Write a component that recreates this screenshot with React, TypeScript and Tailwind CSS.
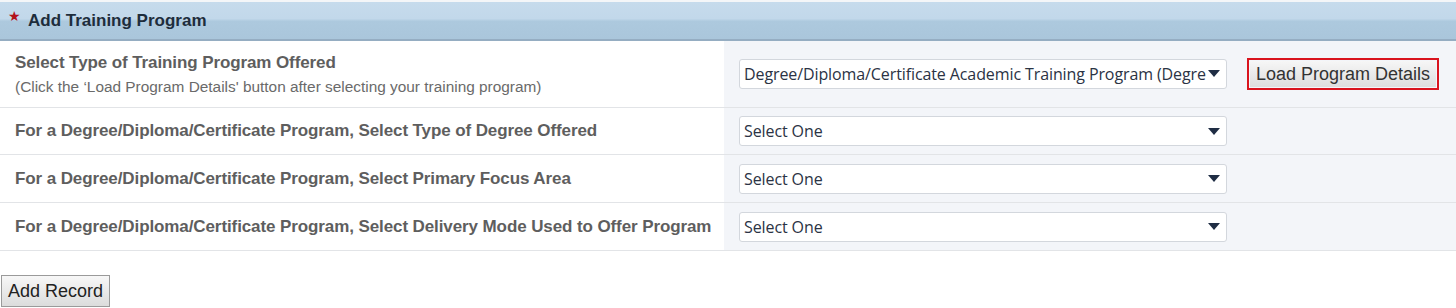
import React from 'react';

const Caret = () => (
  <svg width="12" height="7" viewBox="0 0 12 7" className="shrink-0">
    <path d="M0 0 L12 0 L6 7 Z" fill="#1f2d44" />
  </svg>
);

const FakeSelect = ({ value }: { value: string }) => (
  <div className="flex items-center h-[30px] w-[488px] bg-white border border-[#d3d7dd] rounded-[3px] pl-[4px] pr-[6px] gap-[2px]">
    <span className="flex-1 overflow-hidden whitespace-nowrap text-[16px] text-[#2b3344] font-['Segoe_UI','Open_Sans',sans-serif] tracking-[-0.1px]">
      {value}
    </span>
    <Caret />
  </div>
);

const App = () => {
  const rows = [
    'For a Degree/Diploma/Certificate Program, Select Type of Degree Offered',
    'For a Degree/Diploma/Certificate Program, Select Primary Focus Area',
    'For a Degree/Diploma/Certificate Program, Select Delivery Mode Used to Offer Program',
  ];

  return (
    <div className="w-[1456px] h-[308px] bg-white font-['Liberation_Sans',Arial,sans-serif] overflow-hidden">
      <div className="h-[2px] bg-[#f4f6f8]" />
      {/* header */}
      <div className="h-[39px] flex items-center gap-[7px] pl-[8px] border-b-2 border-[#95adc2] bg-[linear-gradient(to_bottom,#c6dbec_0%,#c2d8ea_45%,#adc9de_52%,#aac6db_100%)]">
        <span className="text-[#b3121b] text-[14px] leading-none -mt-[10px]">★</span>
        <span className="text-[17px] font-bold text-[#1e2d3c]">Add Training Program</span>
      </div>

      {/* row 1 */}
      <div className="flex h-[67px] border-b border-[#e2e4e7]">
        <div className="w-[724px] pl-[15px] pt-[12px]">
          <div className="text-[17px] font-bold text-[#5e5e5e] leading-[20px] tracking-[-0.1px]">Select Type of Training Program Offered</div>
          <div className="text-[15.4px] text-[#6a6a6a] leading-[18px] mt-[5px]">
            (Click the ‘Load Program Details' button after selecting your training program)
          </div>
        </div>
        <div className="flex-1 bg-[#f3f5f9] flex items-center pl-[15px] gap-[20px] pb-[1px]">
          <FakeSelect value="Degree/Diploma/Certificate Academic Training Program (Degree/Diploma/Certificate)" />
          <div className="border-2 border-[#d9141e] p-px">
            <button className="h-[26px] px-[6px] text-[18px] text-[#333] bg-[linear-gradient(to_bottom,#f6f6f6,#dedede)] leading-none">
              Load Program Details
            </button>
          </div>
        </div>
      </div>

      {rows.map((label, i) => (
        <div key={i} className={`flex border-b border-[#e2e4e7] ${i === 0 ? 'h-[47px]' : 'h-[48px]'}`}>
          <div className="w-[724px] pl-[15px] flex items-center">
            <span className="text-[17px] font-bold text-[#5e5e5e] tracking-[-0.1px]">{label}</span>
          </div>
          <div className="flex-1 bg-[#f3f5f9] flex items-center pl-[15px]">
            <FakeSelect value="Select One" />
          </div>
        </div>
      ))}

      <div className="pt-[24px] pl-[1px]">
        <button className="h-[32px] px-[6px] border border-[#9a9a9a] text-[18px] text-[#222] bg-[linear-gradient(to_bottom,#f7f7f7,#dcdcdc)]">
          Add Record
        </button>
      </div>
    </div>
  );
};

export default App;
